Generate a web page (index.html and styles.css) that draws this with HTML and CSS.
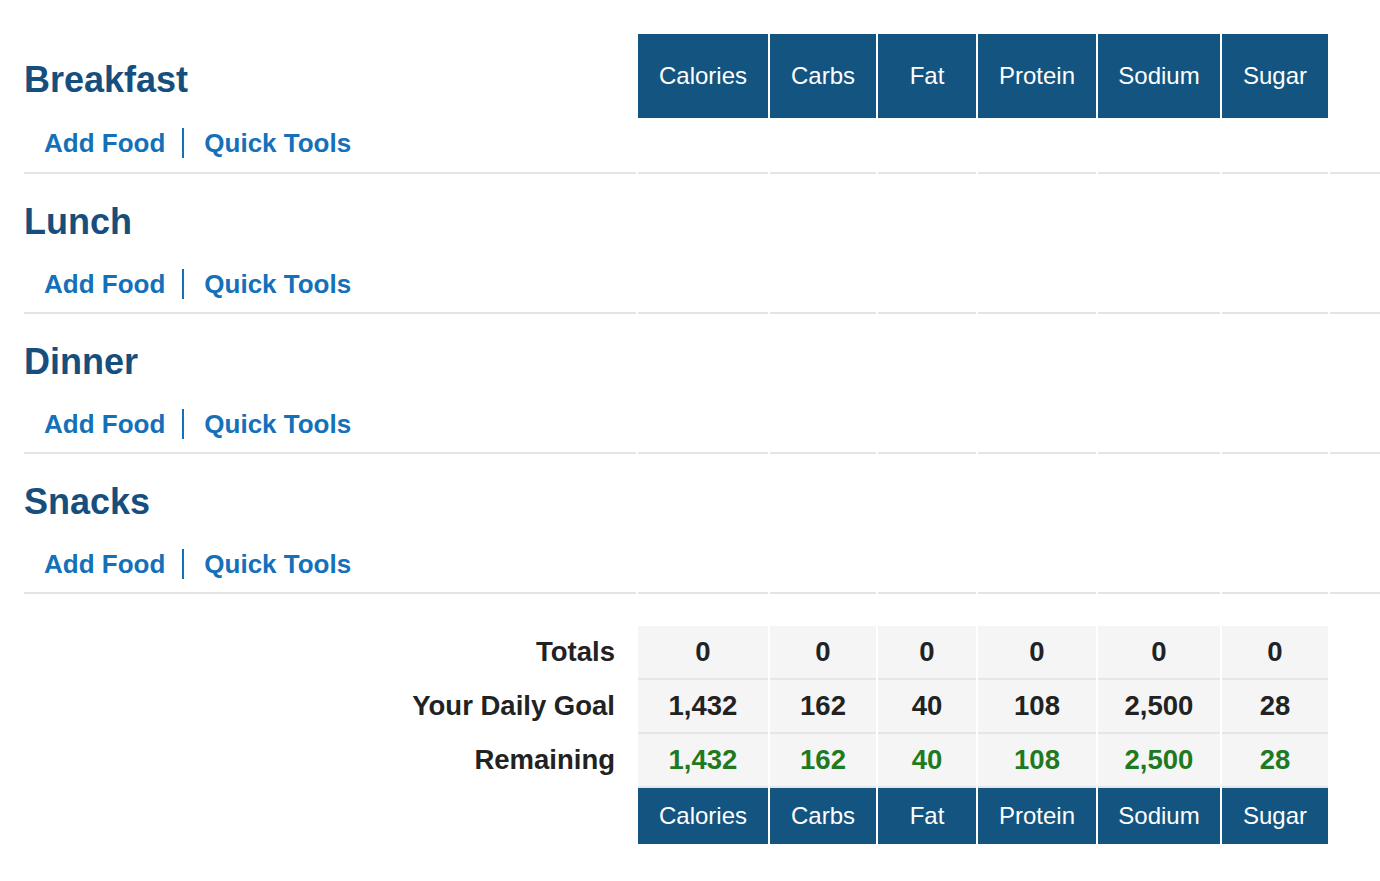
FILE: index.html
```html
<!DOCTYPE html>
<html lang="en">
<head>
  <meta charset="UTF-8" />
  <meta name="viewport" content="width=device-width, initial-scale=1.0"/>
  <title>Food Diary</title>
  <link rel="stylesheet" href="styles.css">
</head>
<body>
  <table class="diary">
    <colgroup>
      <col class="col-name">
      <col class="col-calories">
      <col class="col-carbs">
      <col class="col-fat">
      <col class="col-protein">
      <col class="col-sodium">
      <col class="col-sugar">
      <col class="col-delete">
    </colgroup>

    <tbody>
      <!-- Breakfast carries the column headings -->
      <tr class="meal-header first-meal">
        <td class="meal-name">Breakfast</td>
        <td class="nutrient">Calories</td>
        <td class="nutrient">Carbs</td>
        <td class="nutrient">Fat</td>
        <td class="nutrient">Protein</td>
        <td class="nutrient">Sodium</td>
        <td class="nutrient">Sugar</td>
        <td></td>
      </tr>
      <tr class="meal-actions first-meal">
        <td class="actions"><a href="#" class="add-food">Add Food</a><a href="#" class="quick-tools">Quick Tools</a></td>
        <td></td><td></td><td></td><td></td><td></td><td></td><td></td>
      </tr>

      <tr class="meal-header">
        <td class="meal-name">Lunch</td>
        <td></td><td></td><td></td><td></td><td></td><td></td><td></td>
      </tr>
      <tr class="meal-actions">
        <td class="actions"><a href="#" class="add-food">Add Food</a><a href="#" class="quick-tools">Quick Tools</a></td>
        <td></td><td></td><td></td><td></td><td></td><td></td><td></td>
      </tr>

      <tr class="meal-header">
        <td class="meal-name">Dinner</td>
        <td></td><td></td><td></td><td></td><td></td><td></td><td></td>
      </tr>
      <tr class="meal-actions">
        <td class="actions"><a href="#" class="add-food">Add Food</a><a href="#" class="quick-tools">Quick Tools</a></td>
        <td></td><td></td><td></td><td></td><td></td><td></td><td></td>
      </tr>

      <tr class="meal-header">
        <td class="meal-name">Snacks</td>
        <td></td><td></td><td></td><td></td><td></td><td></td><td></td>
      </tr>
      <tr class="meal-actions">
        <td class="actions"><a href="#" class="add-food">Add Food</a><a href="#" class="quick-tools">Quick Tools</a></td>
        <td></td><td></td><td></td><td></td><td></td><td></td><td></td>
      </tr>
    </tbody>

    <tbody class="totals">
      <tr class="spacer"><td colspan="8"></td></tr>
      <tr class="total-row">
        <td class="total-label">Totals</td>
        <td>0</td><td>0</td><td>0</td><td>0</td><td>0</td><td>0</td>
        <td class="empty"></td>
      </tr>
      <tr class="total-row">
        <td class="total-label">Your Daily Goal</td>
        <td>1,432</td><td>162</td><td>40</td><td>108</td><td>2,500</td><td>28</td>
        <td class="empty"></td>
      </tr>
      <tr class="total-row remaining">
        <td class="total-label">Remaining</td>
        <td class="positive">1,432</td>
        <td class="positive">162</td>
        <td class="positive">40</td>
        <td class="positive">108</td>
        <td class="positive">2,500</td>
        <td class="positive">28</td>
        <td class="empty"></td>
      </tr>
      <tr class="total-footer">
        <td class="blank"></td>
        <td class="nutrient">Calories</td>
        <td class="nutrient">Carbs</td>
        <td class="nutrient">Fat</td>
        <td class="nutrient">Protein</td>
        <td class="nutrient">Sodium</td>
        <td class="nutrient">Sugar</td>
        <td class="blank"></td>
      </tr>
    </tbody>
  </table>
</body>
</html>
```

FILE: styles.css
```css
html {
  overflow: hidden;
}
body {
  margin: 0;
  font-family: "Liberation Sans", Arial, Helvetica, sans-serif;
  color: #222;
  background: #fff;
}
.diary {
  table-layout: fixed;
  border-collapse: separate;
  border-spacing: 2px 0;
  margin: 34px 0 0 22px;
  width: 1390px;
}
.col-name { width: 612px; }
.col-calories { width: 130px; }
.col-carbs { width: 106px; }
.col-fat { width: 98px; }
.col-protein { width: 118px; }
.col-sodium { width: 122px; }
.col-sugar { width: 106px; }
.col-delete { width: 80px; }

td {
  padding: 0;
}

/* meal rows */
.meal-header {
  height: 84px;
}
.meal-name {
  padding-top: 12px;
  vertical-align: middle;
  font-size: 36px;
  font-weight: bold;
  color: #164f7d;
}
.first-meal .meal-name {
  padding-top: 8px;
}
.nutrient {
  background: #135580;
  color: #fff;
  font-size: 24px;
  text-align: center;
  vertical-align: middle;
}
.meal-actions {
  height: 56px;
}
.meal-actions td {
  border-bottom: 2px solid #e4e4e4;
}
.actions {
  vertical-align: top;
  padding: 11px 0 0 20px;
}
.first-meal .actions {
  padding-top: 10px;
}
.actions a {
  display: inline-block;
  line-height: 30px;
  font-size: 26px;
  font-weight: bold;
  color: #1471b9;
  text-decoration: none;
}
.add-food {
  margin-right: 17px;
}
.quick-tools {
  border-left: 2px solid #1471b9;
  padding-left: 20px;
}

/* totals block */
.spacer {
  height: 32px;
}
.total-row {
  height: 54px;
}
.total-row td {
  background: #f5f5f5;
  border-bottom: 2px solid #e6e6e6;
  font-size: 27.5px;
  font-weight: bold;
  text-align: center;
  vertical-align: middle;
}
.total-row td.total-label,
.total-row td.empty {
  background: none;
  border-bottom: none;
}
.total-row td.total-label {
  text-align: right;
  padding-right: 21px;
  padding-bottom: 2px;
}
.positive {
  color: #1f7a1f;
}
.total-footer {
  height: 56px;
}
```
